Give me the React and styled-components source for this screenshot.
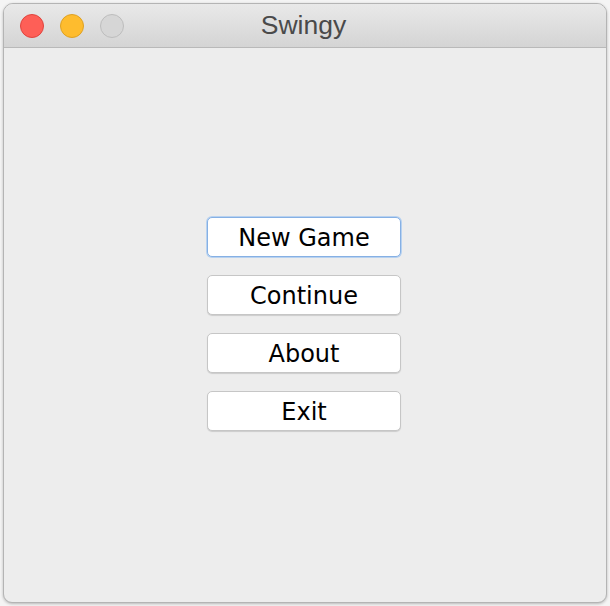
import React from "react";
import styled, { createGlobalStyle } from "styled-components";

const Global = createGlobalStyle`
  html, body { margin: 0; padding: 0; background: #ffffff; }
  body { width: 610px; height: 606px; overflow: hidden; }
`;

const Desktop = styled.div`
  width: 610px;
  height: 606px;
  box-sizing: border-box;
  padding: 3px;
  background: #f4f4f4;
`;

const Window = styled.div`
  height: 100%;
  box-sizing: border-box;
  display: flex;
  flex-direction: column;
  border: 1px solid #b4b4b4;
  border-radius: 10px 10px 9px 9px;
  overflow: hidden;
  box-shadow: 0 1px 3px rgba(0, 0, 0, 0.25);
  background: #ededed;
`;

const TitleBar = styled.div`
  position: relative;
  height: 43px;
  flex: none;
  display: flex;
  align-items: center;
  justify-content: center;
  background: linear-gradient(#e9e9e9, #d4d4d4);
  border-bottom: 1px solid #b9b9b9;
`;

const Lights = styled.div`
  position: absolute;
  left: 16px;
  top: 10px;
  display: flex;
  gap: 16px;
`;

const Light = styled.span`
  width: 24px;
  height: 24px;
  border-radius: 50%;
  box-sizing: border-box;
  background: ${(p) => p.$bg};
  border: 1px solid ${(p) => p.$bd};
`;

const Title = styled.div`
  font-family: "Liberation Sans", Arial, sans-serif;
  font-size: 26.5px;
  color: #4a4a4a;
  margin-right: 3px;
`;

const Content = styled.div`
  flex: 1;
  display: flex;
  flex-direction: column;
  align-items: center;
  padding-top: 169px;
  padding-right: 2px;
  gap: 18px;
`;

const Button = styled.button`
  width: 194px;
  height: 40px;
  box-sizing: border-box;
  background: #ffffff;
  border: 1px solid ${(p) => (p.$focused ? "#86b0e4" : "#c6c6c6")};
  box-shadow: ${(p) =>
    p.$focused ? "0 0 0 1px #b8d2f0" : "0 1px 1px rgba(0,0,0,0.14)"};
  border-radius: 5px;
  font-family: "DejaVu Sans", "Noto Sans", sans-serif;
  font-size: 24px;
  color: #000000;
  padding: 0;
  padding-top: 1px;
  cursor: default;
`;

const items = ["New Game", "Continue", "About", "Exit"];

export default function App() {
  return (
    <>
      <Global />
      <Desktop>
        <Window>
          <TitleBar>
            <Lights>
              <Light $bg="#fe5f57" $bd="#e0443e" />
              <Light $bg="#febc2e" $bd="#dea123" />
              <Light $bg="#d6d6d6" $bd="#bdbdbd" />
            </Lights>
            <Title>Swingy</Title>
          </TitleBar>
          <Content>
            {items.map((t, i) => (
              <Button key={t} $focused={i === 0}>
                {t}
              </Button>
            ))}
          </Content>
        </Window>
      </Desktop>
    </>
  );
}
